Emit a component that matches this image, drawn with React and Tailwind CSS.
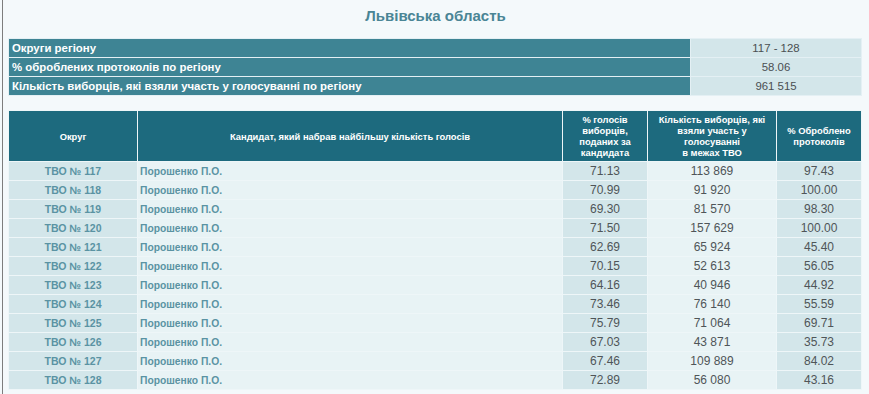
const region = [
  ['Округи регіону', '117 - 128'],
  ['% оброблених протоколів по регіону', '58.06'],
  ['Кількість виборців, які взяли участь у голосуванні по регіону', '961 515'],
]

const rows = [
  [117, '71.13', '113 869', '97.43'],
  [118, '70.99', '91 920', '100.00'],
  [119, '69.30', '81 570', '98.30'],
  [120, '71.50', '157 629', '100.00'],
  [121, '62.69', '65 924', '45.40'],
  [122, '70.15', '52 613', '56.05'],
  [123, '64.16', '40 946', '44.92'],
  [124, '73.46', '76 140', '55.59'],
  [125, '75.79', '71 064', '69.71'],
  [126, '67.03', '43 871', '35.73'],
  [127, '67.46', '109 889', '84.02'],
  [128, '72.89', '56 080', '43.16'],
]

export default function App() {
  return (
    <div className="h-[394px] w-[869px] overflow-hidden bg-[#f4f9fb] font-['Liberation_Sans',Arial,sans-serif]">
      <div className="ml-[2px] h-full border-l border-[#7d7d7d] pl-[5px]">
        <h1 className="pt-[6px] pr-[6px] text-center text-[15px] font-bold leading-[20px] text-[#4a8595]">
          Львівська область
        </h1>

        <table className="mt-[12px] w-[854px] table-fixed border-separate border-spacing-px bg-[#e4f0f4]">
          <colgroup>
            <col className="w-[681px]" />
            <col />
          </colgroup>
          <tbody>
            {region.map(([label, value]) => (
              <tr key={label} className="h-[18px]">
                <td className="bg-[#3e8494] px-[3px] text-[11.4px] font-bold leading-[18px] text-white">{label}</td>
                <td className="bg-[#d3e6ea] text-center text-[11.4px] leading-[18px] text-[#4a4f52]">{value}</td>
              </tr>
            ))}
          </tbody>
        </table>

        <table className="mt-[14px] w-[854px] table-fixed border-separate border-spacing-px bg-[#eef6f8]">
          <colgroup>
            <col className="w-[128px]" />
            <col className="w-[424px]" />
            <col className="w-[84px]" />
            <col className="w-[128px]" />
            <col />
          </colgroup>
          <thead>
            <tr className="h-[50px] bg-[#1d6a7e] text-[9.4px] font-bold leading-[11px] text-white">
              <th>Округ</th>
              <th>Кандидат, який набрав найбільшу кількість голосів</th>
              <th className="px-[4px]">% голосів виборців, поданих за кандидата</th>
              <th className="px-[4px]">
                Кількість виборців, які взяли участь у голосуванні
                <br />в межах ТВО
              </th>
              <th className="px-[6px]">% Оброблено протоколів</th>
            </tr>
          </thead>
          <tbody>
            {rows.map(([n, pct, voters, proc]) => (
              <tr key={n} className="h-[18px] text-[12px] leading-[17px]">
                <td className="bg-[#d3e6ea] pt-px text-center text-[10.5px] font-bold text-[#5a93a3]">ТВО № {n}</td>
                <td className="bg-[#e8f3f5] pt-px pl-[2px] text-[10.3px] font-bold text-[#5a93a3]">Порошенко П.О.</td>
                <td className="bg-[#d3e6ea] pt-px text-center text-[#4f5558]">{pct}</td>
                <td className="bg-[#e8f3f5] pt-px text-center text-[#4f5558]">{voters}</td>
                <td className="bg-[#d3e6ea] pt-px text-center text-[#4f5558]">{proc}</td>
              </tr>
            ))}
          </tbody>
        </table>
      </div>
    </div>
  )
}
